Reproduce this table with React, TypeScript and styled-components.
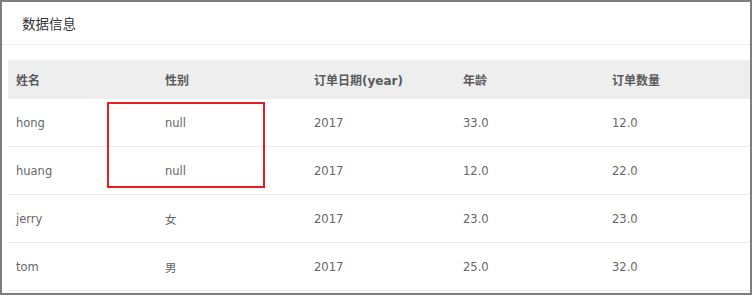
import React from 'react'
import styled, { createGlobalStyle } from 'styled-components'

type Row = {
  name: string
  gender: string
  year: string
  age: string
  count: string
}

const rows: Row[] = [
  { name: 'hong', gender: 'null', year: '2017', age: '33.0', count: '12.0' },
  { name: 'huang', gender: 'null', year: '2017', age: '12.0', count: '22.0' },
  { name: 'jerry', gender: '女', year: '2017', age: '23.0', count: '23.0' },
  { name: 'tom', gender: '男', year: '2017', age: '25.0', count: '32.0' }
]

const headers = ['姓名', '性别', '订单日期(year)', '年龄', '订单数量']

const GlobalStyle = createGlobalStyle`
  html, body {
    margin: 0;
    padding: 0;
    background: #ffffff;
  }
  body {
    font-family: "DejaVu Sans", "Noto Sans CJK SC", sans-serif;
  }
`

const StyledPanel = styled.div`
  box-sizing: border-box;
  width: 752px;
  height: 295px;
  border: 2px solid #7d7d7d;
  background: #ffffff;
  overflow: hidden;
`

const StyledTitleBar = styled.div`
  box-sizing: border-box;
  height: 43px;
  padding: 0 0 0 20px;
  display: flex;
  align-items: center;
  border-bottom: 1px solid #efefef;
  font-family: "Noto Sans CJK SC", sans-serif;
  font-size: 13.5px;
  color: #333333;
`

const StyledBody = styled.div`
  position: relative;
  padding: 15px 0 0 6px;
`

const StyledRow = styled.div<{ $head?: boolean }>`
  box-sizing: border-box;
  display: grid;
  grid-template-columns: repeat(5, 149px);
  align-items: center;
  height: ${(p) => (p.$head ? '39px' : '48px')};
  background: ${(p) => (p.$head ? '#eeeeee' : '#ffffff')};
  border-bottom: ${(p) => (p.$head ? 'none' : '1px solid #ebebeb')};
`

const StyledCell = styled.div<{ $head?: boolean }>`
  padding-left: 8px;
  font-size: ${(p) => (p.$head ? '12px' : '11.5px')};
  font-weight: ${(p) => (p.$head ? 'bold' : 'normal')};
  color: ${(p) => (p.$head ? '#5a5a5a' : '#666666')};
  white-space: nowrap;
`

const StyledMark = styled.div`
  position: absolute;
  left: 105px;
  top: 57px;
  width: 158px;
  height: 86px;
  box-sizing: border-box;
  border: 2px solid #ee1c1c;
  pointer-events: none;
`

export default function App() {
  return (
    <>
      <GlobalStyle />
      <StyledPanel>
        <StyledTitleBar>数据信息</StyledTitleBar>
        <StyledBody>
          <StyledRow $head>
            {headers.map((h) => (
              <StyledCell $head key={h}>
                {h}
              </StyledCell>
            ))}
          </StyledRow>
          {rows.map((r) => (
            <StyledRow key={r.name}>
              <StyledCell>{r.name}</StyledCell>
              <StyledCell>{r.gender}</StyledCell>
              <StyledCell>{r.year}</StyledCell>
              <StyledCell>{r.age}</StyledCell>
              <StyledCell>{r.count}</StyledCell>
            </StyledRow>
          ))}
          <StyledMark />
        </StyledBody>
      </StyledPanel>
    </>
  )
}
